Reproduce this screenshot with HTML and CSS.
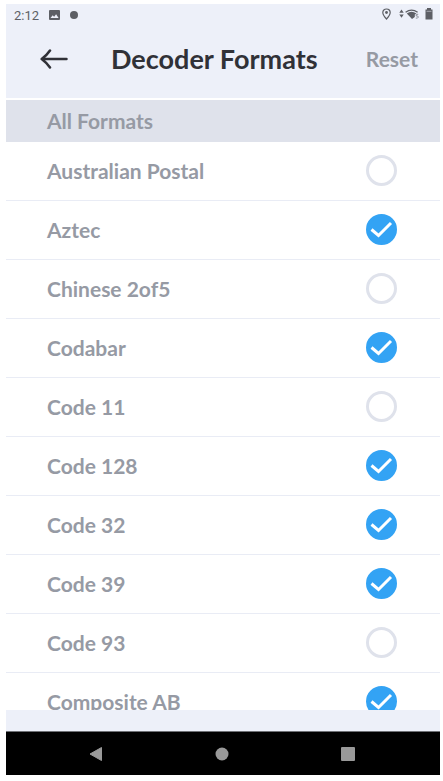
FILE: index.html
```html
<!DOCTYPE html>
<html lang="en">
<head>
<meta charset="utf-8">
<meta name="viewport" content="width=device-width, initial-scale=1">
<title>Decoder Formats</title>
<link rel="stylesheet" href="styles.css">
</head>
<body>
<div class="screen">
  <div class="status">
    <div class="status-group">
      <span class="clock">2:12</span>
      <svg class="picture" width="11" height="10" viewBox="0 0 11 10" aria-hidden="true"><rect width="11" height="10" rx="1" fill="#5d5f65"/><path d="M1.5 8L3.7 5.2L5.1 6.8L7.1 4.2L9.6 8Z" fill="#edf0f9"/></svg>
      <svg width="8" height="8" viewBox="0 0 8 8" aria-hidden="true"><circle cx="4" cy="4" r="4" fill="#5d5f65"/></svg>
    </div>
    <div class="status-group right">
      <svg class="pin" width="9" height="12" viewBox="0 0 9 12" aria-hidden="true"><path d="M4.5 1C2.3 1 .8 2.5 .8 4.5C.8 7 4.5 11 4.5 11S8.2 7 8.2 4.5C8.2 2.5 6.7 1 4.5 1Z" fill="none" stroke="#5d5f65" stroke-width="1.2"/><circle cx="4.5" cy="4.5" r="1.4" fill="#5d5f65"/></svg>
      <svg class="wifi" width="20" height="12" viewBox="0 0 20 12" aria-hidden="true"><path d="M.3 4.8L2.5 1.5L4.7 4.8ZM.3 6.5H4.7L2.5 9.8Z" fill="#5d5f65"/><path d="M6.6 4.3Q12.5 -.2 18.6 4.3" fill="none" stroke="#5d5f65" stroke-width="1.3"/><path d="M7.8 5.5Q12.5 1.8 17.4 5.5L15.8 6.4V9L13 11Z" fill="#5d5f65"/><path d="M19.2 6.3H17.2V8H18.2Q19.4 8 19.3 9.2Q19 10.5 16.8 10.1" fill="none" stroke="#85878e" stroke-width=".9"/></svg>
      <svg width="8" height="12" viewBox="0 0 8 12" aria-hidden="true"><path d="M2 0H6V1.5H7.5V11.5H.5V1.5H2Z" fill="#5d5f65"/><path d="M1.5 3.3H6.5" stroke="#b9bbc3" stroke-width=".8"/></svg>
    </div>
  </div>
  <header class="bar">
    <button class="back" type="button" aria-label="Back"><svg width="28" height="20" viewBox="0 0 28 20" aria-hidden="true"><path d="M26.5 10H2M10 1.5Q7 6 1.7 10Q7 14 10 18.5" fill="none" stroke="#303137" stroke-width="2.5" stroke-linecap="round" stroke-linejoin="round"/></svg></button>
    <h1>Decoder Formats</h1>
    <button class="reset" type="button">Reset</button>
  </header>
  <main class="content">
    <h2>All Formats</h2>
    <ul class="formats">
      <li><label for="f1">Australian Postal</label><span class="tick"><input id="f1" type="checkbox"><svg viewBox="0 0 32 32" aria-hidden="true"><path d="M6.5 15.5L13.5 21.5L26 9"/></svg></span></li>
      <li><label for="f2">Aztec</label><span class="tick"><input id="f2" type="checkbox" checked><svg viewBox="0 0 32 32" aria-hidden="true"><path d="M6.5 15.5L13.5 21.5L26 9"/></svg></span></li>
      <li><label for="f3">Chinese 2of5</label><span class="tick"><input id="f3" type="checkbox"><svg viewBox="0 0 32 32" aria-hidden="true"><path d="M6.5 15.5L13.5 21.5L26 9"/></svg></span></li>
      <li><label for="f4">Codabar</label><span class="tick"><input id="f4" type="checkbox" checked><svg viewBox="0 0 32 32" aria-hidden="true"><path d="M6.5 15.5L13.5 21.5L26 9"/></svg></span></li>
      <li><label for="f5">Code 11</label><span class="tick"><input id="f5" type="checkbox"><svg viewBox="0 0 32 32" aria-hidden="true"><path d="M6.5 15.5L13.5 21.5L26 9"/></svg></span></li>
      <li><label for="f6">Code 128</label><span class="tick"><input id="f6" type="checkbox" checked><svg viewBox="0 0 32 32" aria-hidden="true"><path d="M6.5 15.5L13.5 21.5L26 9"/></svg></span></li>
      <li><label for="f7">Code 32</label><span class="tick"><input id="f7" type="checkbox" checked><svg viewBox="0 0 32 32" aria-hidden="true"><path d="M6.5 15.5L13.5 21.5L26 9"/></svg></span></li>
      <li><label for="f8">Code 39</label><span class="tick"><input id="f8" type="checkbox" checked><svg viewBox="0 0 32 32" aria-hidden="true"><path d="M6.5 15.5L13.5 21.5L26 9"/></svg></span></li>
      <li><label for="f9">Code 93</label><span class="tick"><input id="f9" type="checkbox"><svg viewBox="0 0 32 32" aria-hidden="true"><path d="M6.5 15.5L13.5 21.5L26 9"/></svg></span></li>
      <li><label for="f10">Composite AB</label><span class="tick"><input id="f10" type="checkbox" checked><svg viewBox="0 0 32 32" aria-hidden="true"><path d="M6.5 15.5L13.5 21.5L26 9"/></svg></span></li>
    </ul>
  </main>
  <nav class="system">
    <button type="button" aria-label="Back"><svg width="14" height="16" viewBox="0 0 14 16" aria-hidden="true"><path d="M12.5 1.5V14.5L1 8Z" fill="#999" stroke="#999" stroke-linejoin="round"/></svg></button>
    <button type="button" aria-label="Home"><svg width="14" height="16" viewBox="0 0 14 16" aria-hidden="true"><circle cx="7" cy="8" r="6.5" fill="#999"/></svg></button>
    <button type="button" aria-label="Recent apps"><svg width="14" height="16" viewBox="0 0 14 16" aria-hidden="true"><rect y="1" width="14" height="14" rx="1" fill="#999"/></svg></button>
  </nav>
</div>
</body>
</html>
```
FILE: styles.css
```css
* {
  box-sizing: border-box;
}

body {
  margin: 0;
  padding: 4px 3px 6px 6px;
  height: 100vh;
  background: #fff;
  font-family: Lato, "Open Sans", sans-serif;
  font-weight: 700;
  color: #969aa4;
}

button {
  border: 0;
  padding: 0;
  background: none;
  font: inherit;
  color: inherit;
}

svg {
  display: block;
}

.screen {
  height: 100%;
  display: flex;
  flex-direction: column;
  background: #edf0f9;
}

.status {
  display: flex;
  justify-content: space-between;
  align-items: center;
  height: 22px;
  padding: 0 7px 0 8px;
}

.status-group {
  display: flex;
  align-items: center;
  gap: 10px;
}

.right {
  gap: 6px;
  padding-bottom: 2px;
}

.pin {
  margin-right: 2px;
}

.clock {
  font-family: Roboto, sans-serif;
  font-size: 13px;
  font-weight: 400;
  color: #5d5f65;
}

.bar {
  display: flex;
  align-items: center;
  height: 72px;
  padding: 0 22px 6px 34px;
}

.bar h1 {
  flex: 1;
  margin: 0 0 0 43px;
  font-size: 27px;
  line-height: 32px;
  color: #303137;
  white-space: nowrap;
}

.reset {
  font-size: 21px;
  line-height: 24px;
}

.content {
  flex: 1;
  min-height: 0;
  margin-bottom: 21px;
  overflow: hidden;
  background: #fff;
}

h2 {
  margin: 2px 0 0;
  padding: 0 41px;
  background: #dfe2eb;
  font-size: 21px;
  line-height: 42px;
}

.formats {
  margin: 0;
  padding: 0;
  list-style: none;
}

.formats li {
  display: flex;
  justify-content: space-between;
  align-items: center;
  height: 59px;
  padding: 0 43px 0 41px;
  border-bottom: 1px solid #e9ecf5;
}

.formats label {
  flex: 1;
  font-size: 21px;
  line-height: 58px;
}

.tick {
  display: grid;
  width: 32px;
  height: 32px;
}

.tick input,
.tick svg {
  grid-area: 1 / 1;
}

.tick input {
  appearance: none;
  width: 31px;
  height: 31px;
  margin: 0 0 0 1px;
  border: 3px solid #dfe2eb;
  border-radius: 50%;
  background: #fff;
}

.tick input:checked {
  border-color: #33a3f4;
  background: #33a3f4;
}

.tick svg {
  visibility: hidden;
  pointer-events: none;
  z-index: 1;
  fill: none;
  stroke: #fff;
  stroke-width: 3;
}

.tick input:checked + svg {
  visibility: visible;
}

.system {
  display: flex;
  justify-content: space-between;
  align-items: center;
  height: 44px;
  padding: 0 85px 0 83px;
  border-top: 1px solid #6f7176;
  background: #000;
}
```
